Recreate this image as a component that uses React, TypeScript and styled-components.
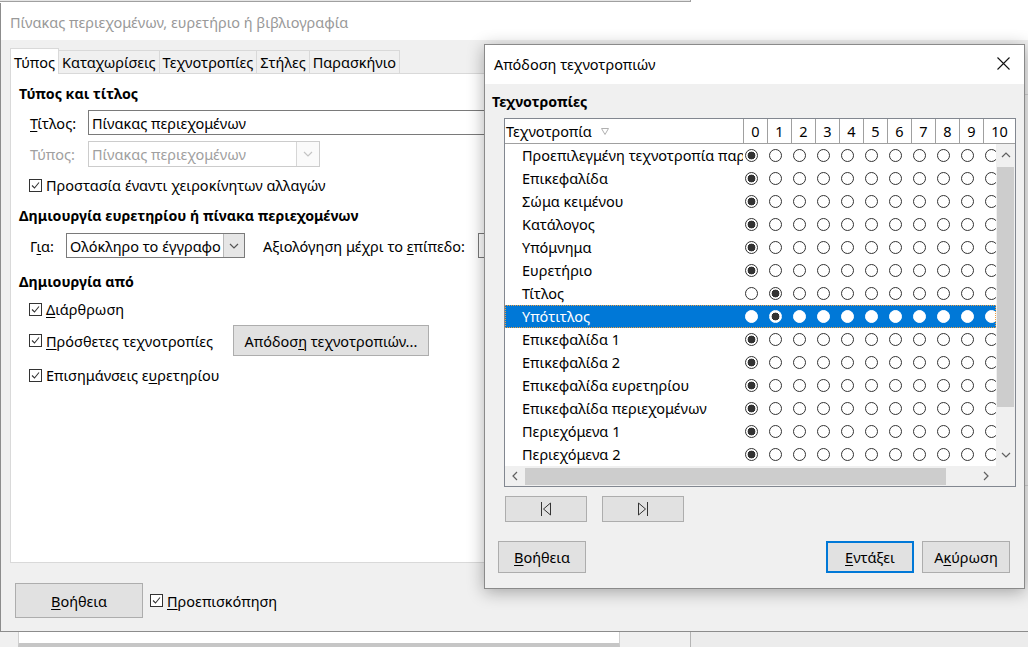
import React from "react";
import styled, { createGlobalStyle } from "styled-components";

const GlobalStyle = createGlobalStyle`
  html, body { margin: 0; padding: 0; }
  body {
    width: 1028px; height: 647px; overflow: hidden;
    background: #f0f0f0;
    font-family: "Noto Sans", "Segoe UI", sans-serif;
    font-size: 14.5px; color: #000;
  }
  * { box-sizing: border-box; }
`;

const Screen = styled.div`
  position: relative;
  width: 1028px;
  height: 647px;
  overflow: hidden;
  display: flex;
  flex-direction: column;
`;

const TopEdge = styled.div`
  height: 3px;
  background: #fff;
  display: flex;
`;
const TopEdgeBehind = styled.div`
  width: 691px;
  height: 2px;
  background: #e6e6e6;
  border-bottom: 1px solid #a0a0a0;
  border-right: 1px solid #a0a0a0;
`;

const MainWindow = styled.div`
  height: 629px;
  display: flex;
  flex-direction: column;
  border-left: 1px solid #8c8c8c;
  border-bottom: 1px solid #8c8c8c;
`;

const WinTitleBar = styled.div<{ $active?: boolean }>`
  height: ${(p) => (p.$active ? 39 : 37)}px;
  flex: none;
  background: #fff;
  display: flex;
  align-items: center;
  justify-content: space-between;
  padding-left: 9px;
  padding-bottom: ${(p) => (p.$active ? 2 : 0)}px;
  color: ${(p) => (p.$active ? "#000" : "#999")};
`;

const MainBody = styled.div`
  flex: 1;
  display: flex;
  flex-direction: column;
  background: #f0f0f0;
  padding-left: 9px;
`;

const MainContent = styled.div`
  height: 523px;
  display: flex;
`;

const LeftPane = styled.div`
  width: 680px;
  padding-top: 8px;
  display: flex;
  flex-direction: column;
`;

const Preview = styled.div`
  flex: 1;
  margin: 54px 0 77px 14px;
  border-top: 1px solid #d4d4d4;
  border-bottom: 1px solid #d4d4d4;
`;

const TabBar = styled.div`
  height: 25px;
  display: flex;
  align-items: flex-end;
`;

const Tab = styled.div<{ $active?: boolean }>`
  height: ${(p) => (p.$active ? 26 : 23)}px;
  margin-bottom: ${(p) => (p.$active ? -1 : 0)}px;
  position: relative;
  z-index: ${(p) => (p.$active ? 1 : 0)};
  padding: 0 3px;
  display: flex;
  align-items: center;
  background: ${(p) => (p.$active ? "#fff" : "#f0f0f0")};
  border: 1px solid #d9d9d9;
  border-bottom: none;
  margin-left: ${(p) => (p.$active ? 0 : -1)}px;
  white-space: nowrap;
`;

const TabPage = styled.div`
  height: 490px;
  background: #fff;
  border: 1px solid #d9d9d9;
  padding: 10px 8px 0 8px;
  display: flex;
  flex-direction: column;
`;

const SectionHead = styled.div<{ $mt?: number }>`
  font-weight: 700;
  font-size: 14.2px;
  line-height: 20px;
  height: 20px;
  margin-top: ${(p) => p.$mt ?? 0}px;
  white-space: nowrap;
`;

const FieldRow = styled.div<{ $mt: number }>`
  display: flex;
  align-items: center;
  margin-top: ${(p) => p.$mt}px;
  padding-left: 11px;
  white-space: nowrap;
`;

const Label = styled.span<{ $w?: number; $disabled?: boolean; $ml?: number }>`
  width: ${(p) => (p.$w ? `${p.$w}px` : "auto")};
  margin-left: ${(p) => p.$ml ?? 0}px;
  flex: none;
  color: ${(p) => (p.$disabled ? "#a0a0a0" : "#000")};
`;

const TextField = styled.div<{ $w: number; $h: number; $disabled?: boolean }>`
  width: ${(p) => p.$w}px;
  height: ${(p) => p.$h}px;
  flex: none;
  display: flex;
  align-items: stretch;
  background: #fff;
  border: 1px solid ${(p) => (p.$disabled ? "#cccccc" : "#7a7a7a")};
  color: ${(p) => (p.$disabled ? "#a0a0a0" : "#000")};
`;

const FieldText = styled.span`
  flex: 1;
  display: flex;
  align-items: center;
  padding-left: 3px;
  overflow: hidden;
  white-space: nowrap;
`;

const DropButton = styled.span<{ $w: number; $disabled?: boolean }>`
  width: ${(p) => p.$w}px;
  flex: none;
  display: flex;
  align-items: center;
  justify-content: center;
  background: ${(p) => (p.$disabled ? "#fafafa" : "#e6e6e6")};
  border-left: 1px solid ${(p) => (p.$disabled ? "#d6d6d6" : "#b9b9b9")};
`;

const SpinBox = styled.div`
  width: 60px;
  height: 25px;
  margin-left: 13px;
  background: #fff;
  border: 1px solid #7a7a7a;
`;

const CheckRow = styled.div<{ $mt: number }>`
  display: flex;
  align-items: center;
  height: 20px;
  margin-top: ${(p) => p.$mt}px;
  padding-left: 10px;
  white-space: nowrap;
`;

const CheckBox = styled.span`
  width: 13px;
  height: 13px;
  flex: none;
  border: 1px solid #333;
  background: #fff;
  margin-right: 4px;
  display: flex;
  align-items: center;
  justify-content: center;
`;

const CheckWithButton = styled.div<{ $mt: number }>`
  display: flex;
  align-items: center;
  margin-top: ${(p) => p.$mt}px;
  padding-left: 10px;
  white-space: nowrap;
`;

const Button = styled.div<{ $w: number; $h: number; $default?: boolean; $ml?: number }>`
  width: ${(p) => p.$w}px;
  height: ${(p) => p.$h}px;
  flex: none;
  margin-left: ${(p) => p.$ml ?? 0}px;
  display: flex;
  align-items: center;
  justify-content: center;
  background: #e1e1e1;
  border: ${(p) => (p.$default ? "2px solid #0078d7" : "1px solid #adadad")};
  white-space: nowrap;
  color: #000;
`;

const U = styled.span`
  text-decoration: underline;
  text-decoration-thickness: 1px;
  text-underline-offset: 2px;
`;

const Footer = styled.div`
  height: 68px;
  display: flex;
  align-items: flex-start;
  padding: 20px 0 0 5px;
`;

const FooterCheck = styled.div`
  display: flex;
  align-items: center;
  height: 35px;
  margin-left: 7px;
  white-space: nowrap;
`;

const BottomStrip = styled.div`
  height: 15px;
  display: flex;
`;
const BehindPage = styled.div`
  margin-left: 18px;
  width: 602px;
  background: #fff;
  border-left: 1px solid #d0d0d0;
  border-right: 1px solid #d0d0d0;
  border-bottom: 4px solid #c6c6c6;
`;
const BehindEdge = styled.div`
  margin-left: 70px;
  flex: 1;
  border-left: 1px solid #b4b4b4;
  background: #ececec;
`;

/* ---------- popup ---------- */

const Popup = styled.div`
  position: absolute;
  left: 484px;
  top: 44px;
  width: 541px;
  height: 545px;
  display: flex;
  flex-direction: column;
  border: 1px solid #8a8a8a;
  background: #f0f0f0;
  box-shadow: 0 3px 16px rgba(0, 0, 0, 0.32);
`;

const CloseBtn = styled.span`
  width: 42px;
  height: 37px;
  display: flex;
  align-items: center;
  justify-content: center;
`;

const PopupBody = styled.div`
  flex: 1;
  display: flex;
  flex-direction: column;
  padding: 8px 8px 0 7px;
`;

const TableBox = styled.div`
  margin: 6px 0 0 12px;
  width: 512px;
  height: 369px;
  border: 1px solid #828790;
  background: #fff;
  display: flex;
  flex-direction: column;
`;

const HeaderRow = styled.div`
  height: 25px;
  flex: none;
  display: flex;
  border-bottom: 1px solid #a0a0a0;
`;

const HeaderName = styled.div`
  width: 238px;
  padding-left: 1px;
  display: flex;
  align-items: center;
  gap: 9px;
  white-space: nowrap;
`;

const HeaderNum = styled.div<{ $w: number }>`
  width: ${(p) => p.$w}px;
  border-left: 1px solid #a0a0a0;
  display: flex;
  align-items: center;
  justify-content: center;
`;

const ListArea = styled.div`
  height: 322px;
  flex: none;
  display: flex;
`;

const Rows = styled.div`
  width: 491px;
  overflow: hidden;
  display: flex;
  flex-direction: column;
`;

const Row = styled.div<{ $selected?: boolean }>`
  height: 23px;
  flex: none;
  width: 532px;
  display: flex;
  align-items: center;
  padding-bottom: 1px;
  background: ${(p) => (p.$selected ? "#0078d7" : "transparent")};
  color: ${(p) => (p.$selected ? "#fff" : "#000")};
  position: relative;
`;

const FocusRect = styled.span`
  position: absolute;
  left: 0;
  top: 0;
  width: 491px;
  height: 23px;
  border: 1px dotted #f0a040;
  pointer-events: none;
`;

const NameCell = styled.div`
  width: 238px;
  flex: none;
  padding: 0 6px 0 17px;
  overflow: hidden;
  white-space: nowrap;
`;

const RadioCell = styled.div`
  width: 24px;
  flex: none;
  padding-left: 2px;
  display: flex;
  align-items: center;
`;

const Radio = styled.span<{ $checked?: boolean; $inverted?: boolean }>`
  width: 13px;
  height: 13px;
  border-radius: 50%;
  border: 1px solid ${(p) => (p.$inverted ? "#fff" : "#333")};
  background: ${(p) =>
    p.$checked
      ? "radial-gradient(circle, #333 0 3.6px, #fff 4.2px)"
      : "#fff"};
`;

const VScroll = styled.div`
  width: 19px;
  flex: none;
  display: flex;
  flex-direction: column;
  background: #f0f0f0;
`;

const ArrowBox = styled.span<{ $size: number; $w?: number }>`
  height: ${(p) => p.$size}px;
  width: ${(p) => (p.$w ? `${p.$w}px` : "auto")};
  flex: none;
  display: flex;
  align-items: center;
  justify-content: center;
`;

const VTrack = styled.div`
  flex: 1;
  padding: 1px 1px 0 1px;
`;

const VThumb = styled.div`
  height: 240px;
  background: #cdcdcd;
`;

const HScroll = styled.div`
  height: 20px;
  flex: none;
  display: flex;
  background: #f0f0f0;
`;

const HTrack = styled.div`
  width: 451px;
  flex: none;
  padding: 2px 0 1px 0;
`;

const HThumb = styled.div`
  width: 421px;
  height: 100%;
  background: #cdcdcd;
`;

const Corner = styled.div`
  flex: 1;
  background: #f0f0f0;
`;

const NavRow = styled.div`
  display: flex;
  gap: 15px;
  margin: 9px 0 0 13px;
`;

const ButtonRow = styled.div`
  display: flex;
  align-items: center;
  margin: 19px 6px 0 6px;
`;

const Spacer = styled.div`
  flex: 1;
`;

const Chevron = ({ dir, color = "#606060" }: { dir: "up" | "down" | "left" | "right"; color?: string }) => {
  const d = {
    up: "M1 5 L5 1 L9 5",
    down: "M1 1 L5 5 L9 1",
    left: "M5 1 L1 5 L5 9",
    right: "M1 1 L5 5 L1 9",
  }[dir];
  const vertical = dir === "up" || dir === "down";
  return (
    <svg width={vertical ? 10 : 6} height={vertical ? 6 : 10} viewBox={vertical ? "0 0 10 6" : "0 0 6 10"}>
      <path d={d} fill="none" stroke={color} strokeWidth="1.2" />
    </svg>
  );
};

const CheckMark = () => (
  <svg width="11" height="11" viewBox="0 0 11 11">
    <path d="M2 5.5 L4.5 8 L9 2.5" fill="none" stroke="#333" strokeWidth="1.1" />
  </svg>
);

const Check = () => (
  <CheckBox>
    <CheckMark />
  </CheckBox>
);

const rows: [string, number][] = [
  ["Προεπιλεγμένη τεχνοτροπία παραγράφου", 0],
  ["Επικεφαλίδα", 0],
  ["Σώμα κειμένου", 0],
  ["Κατάλογος", 0],
  ["Υπόμνημα", 0],
  ["Ευρετήριο", 0],
  ["Τίτλος", 1],
  ["Υπότιτλος", 1],
  ["Επικεφαλίδα 1", 0],
  ["Επικεφαλίδα 2", 0],
  ["Επικεφαλίδα ευρετηρίου", 0],
  ["Επικεφαλίδα περιεχομένων", 0],
  ["Περιεχόμενα 1", 0],
  ["Περιεχόμενα 2", 0],
];
const SELECTED = 7;
const levels = [0, 1, 2, 3, 4, 5, 6, 7, 8, 9, 10];

export default function App() {
  return (
    <Screen>
      <GlobalStyle />
      <TopEdge>
        <TopEdgeBehind />
      </TopEdge>
      <MainWindow>
        <WinTitleBar>Πίνακας περιεχομένων, ευρετήριο ή βιβλιογραφία</WinTitleBar>
        <MainBody>
          <MainContent>
            <LeftPane>
              <TabBar>
                <Tab $active>Τύπος</Tab>
                <Tab>Καταχωρίσεις</Tab>
                <Tab>Τεχνοτροπίες</Tab>
                <Tab>Στήλες</Tab>
                <Tab>Παρασκήνιο</Tab>
              </TabBar>
              <TabPage>
                <SectionHead>Τύπος και τίτλος</SectionHead>
                <FieldRow $mt={6}>
                  <Label $w={58}>
                    <U>Τ</U>ίτλος:
                  </Label>
                  <TextField $w={560} $h={25}>
                    <FieldText>Πίνακας περιεχομένων</FieldText>
                  </TextField>
                </FieldRow>
                <FieldRow $mt={6}>
                  <Label $w={58} $disabled>
                    Τύπος:
                  </Label>
                  <TextField $w={232} $h={26} $disabled>
                    <FieldText>Πίνακας περιεχομένων</FieldText>
                    <DropButton $w={23} $disabled>
                      <Chevron dir="down" color="#c4c4c4" />
                    </DropButton>
                  </TextField>
                </FieldRow>
                <CheckRow $mt={8}>
                  <Check />
                  <span>
                    Προστασία έναντι <U>χ</U>ειροκίνητων αλλαγών
                  </span>
                </CheckRow>
                <SectionHead $mt={11}>Δημιουργία ευρετηρίου ή πίνακα περιεχομένων</SectionHead>
                <FieldRow $mt={7}>
                  <Label $w={36}>
                    Γ<U>ι</U>α:
                  </Label>
                  <TextField $w={179} $h={25}>
                    <FieldText>Ολόκληρο το έγγραφο</FieldText>
                    <DropButton $w={21}>
                      <Chevron dir="down" color="#555" />
                    </DropButton>
                  </TextField>
                  <Label $ml={18}>
                    Αξιολόγηση μέχρι το <U>ε</U>πίπεδο:
                  </Label>
                  <SpinBox />
                </FieldRow>
                <SectionHead $mt={14}>Δημιουργία από</SectionHead>
                <CheckRow $mt={7}>
                  <Check />
                  <span>
                    <U>Δ</U>ιάρθρωση
                  </span>
                </CheckRow>
                <CheckWithButton $mt={6}>
                  <Check />
                  <span>
                    <U>Π</U>ρόσθετες τεχνοτροπίες
                  </span>
                  <Button $w={196} $h={31} $ml={20}>
                    <span>
                      Απόδοσ<U>η</U> τεχνοτροπιών...
                    </span>
                  </Button>
                </CheckWithButton>
                <CheckRow $mt={9}>
                  <Check />
                  <span>
                    Επισημάνσεις ε<U>υ</U>ρετηρίου
                  </span>
                </CheckRow>
              </TabPage>
            </LeftPane>
            <Preview />
          </MainContent>
          <Footer>
            <Button $w={128} $h={35}>
              <span>
                <U>Β</U>οήθεια
              </span>
            </Button>
            <FooterCheck>
              <Check />
              <span>
                <U>Π</U>ροεπισκόπηση
              </span>
            </FooterCheck>
          </Footer>
        </MainBody>
      </MainWindow>
      <BottomStrip>
        <BehindPage />
        <BehindEdge />
      </BottomStrip>

      <Popup>
        <WinTitleBar $active>
          <span>Απόδοση τεχνοτροπιών</span>
          <CloseBtn>
            <svg width="13" height="13" viewBox="0 0 13 13">
              <path d="M0.5 0.5 L12.5 12.5 M12.5 0.5 L0.5 12.5" stroke="#111" strokeWidth="1.1" />
            </svg>
          </CloseBtn>
        </WinTitleBar>
        <PopupBody>
          <SectionHead>Τεχνοτροπίες</SectionHead>
          <TableBox>
            <HeaderRow>
              <HeaderName>
                Τεχνοτροπία
                <svg width="8" height="7" viewBox="0 0 8 7">
                  <path d="M0.5 0.5 L7.5 0.5 L4 6.5 Z" fill="none" stroke="#b0b0b0" strokeWidth="1" />
                </svg>
              </HeaderName>
              {levels.map((l) => (
                <HeaderNum key={l} $w={l === 10 ? 32 : 24}>
                  {l}
                </HeaderNum>
              ))}
            </HeaderRow>
            <ListArea>
              <Rows>
                {rows.map(([name, lvl], i) => (
                  <Row key={name} $selected={i === SELECTED}>
                    <NameCell>{name}</NameCell>
                    {levels.map((l) => (
                      <RadioCell key={l}>
                        <Radio $checked={l === lvl} $inverted={i === SELECTED} />
                      </RadioCell>
                    ))}
                    {i === SELECTED && <FocusRect />}
                  </Row>
                ))}
              </Rows>
              <VScroll>
                <ArrowBox $size={22}>
                  <Chevron dir="up" />
                </ArrowBox>
                <VTrack>
                  <VThumb />
                </VTrack>
                <ArrowBox $size={22}>
                  <Chevron dir="down" />
                </ArrowBox>
              </VScroll>
            </ListArea>
            <HScroll>
              <ArrowBox $size={20} $w={20}>
                <Chevron dir="left" />
              </ArrowBox>
              <HTrack>
                <HThumb />
              </HTrack>
              <ArrowBox $size={20} $w={20}>
                <Chevron dir="right" />
              </ArrowBox>
              <Corner />
            </HScroll>
          </TableBox>
          <NavRow>
            <Button $w={82} $h={26}>
              <svg width="12" height="16" viewBox="0 0 12 16">
                <path d="M1.5 1 L1.5 15 M10.5 2 L3.5 8 L10.5 14 Z" fill="none" stroke="#333" strokeWidth="1" />
              </svg>
            </Button>
            <Button $w={82} $h={26}>
              <svg width="12" height="16" viewBox="0 0 12 16">
                <path d="M10.5 1 L10.5 15 M1.5 2 L8.5 8 L1.5 14 Z" fill="none" stroke="#333" strokeWidth="1" />
              </svg>
            </Button>
          </NavRow>
          <ButtonRow>
            <Button $w={88} $h={32}>
              <span>
                <U>Β</U>οήθεια
              </span>
            </Button>
            <Spacer />
            <Button $w={88} $h={32} $default>
              <span>
                <U>Ε</U>ντάξει
              </span>
            </Button>
            <Button $w={88} $h={32} $ml={8}>
              <span>
                Α<U>κ</U>ύρωση
              </span>
            </Button>
          </ButtonRow>
        </PopupBody>
      </Popup>
    </Screen>
  );
}
